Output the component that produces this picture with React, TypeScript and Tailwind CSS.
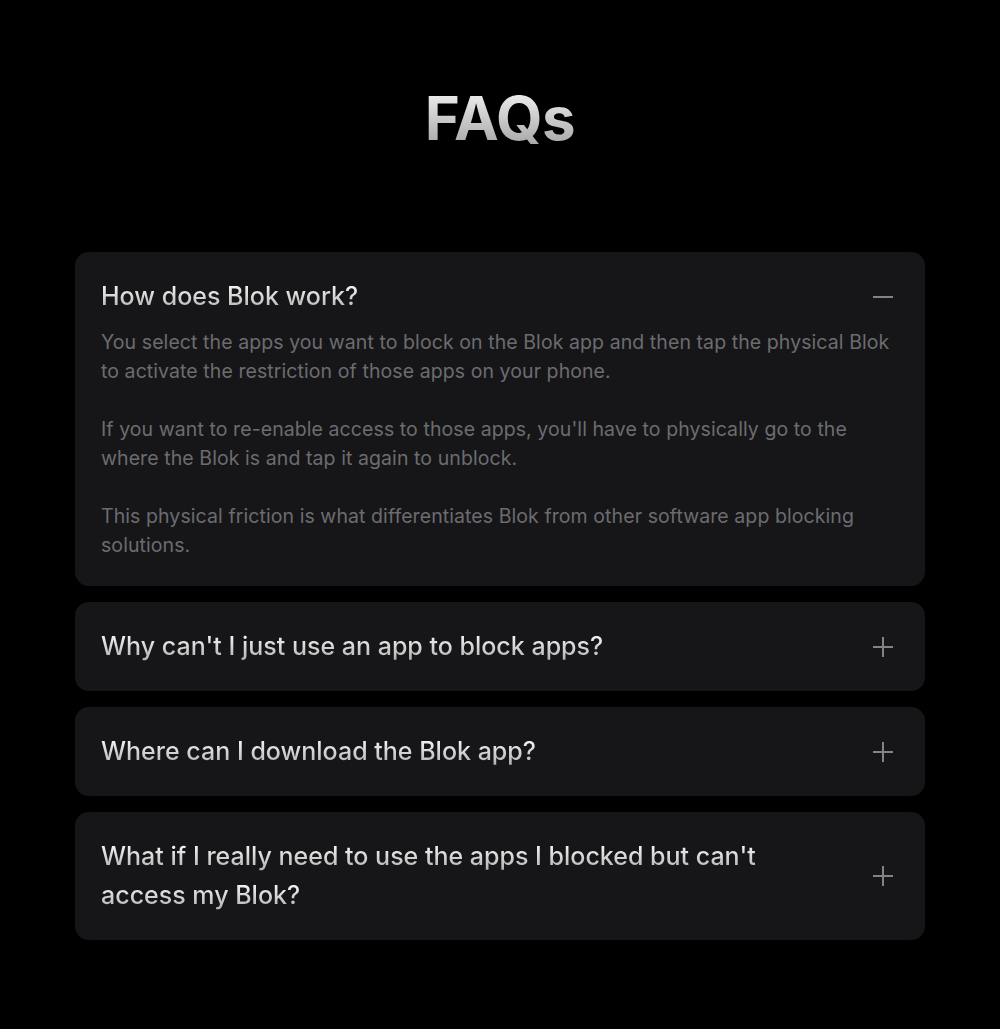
import { useState } from "react"

const faqs = [
  {
    q: "How does Blok work?",
    a: [
      "You select the apps you want to block on the Blok app and then tap the physical Blok to activate the restriction of those apps on your phone.",
      "If you want to re-enable access to those apps, you'll have to physically go to the where the Blok is and tap it again to unblock.",
      "This physical friction is what differentiates Blok from other software app blocking solutions.",
    ],
  },
  { q: "Why can't I just use an app to block apps?", a: [] },
  { q: "Where can I download the Blok app?", a: [] },
  { q: "What if I really need to use the apps I blocked but can't access my Blok?", a: [] },
]

function Icon({ open }: { open: boolean }) {
  return (
    <svg width="22" height="22" viewBox="0 0 22 22" className="shrink-0 text-[#828287]">
      <path d="M1 11h20" stroke="currentColor" strokeWidth="2" />
      {!open && <path d="M11 1v20" stroke="currentColor" strokeWidth="2" />}
    </svg>
  )
}

export default function App() {
  const [open, setOpen] = useState(0)

  return (
    <div className="min-h-[1029px] bg-black pt-[80px] pb-16 font-['Inter','Liberation_Sans',sans-serif]">
      <h1 className="mx-auto w-fit bg-linear-to-b from-white to-[#9a9a9a] bg-clip-text text-center text-[60px] font-bold leading-[76px] tracking-[-0.4px] text-transparent">
        FAQs
      </h1>
      <div className="mx-auto mt-[96px] flex w-[850px] flex-col gap-4">
        {faqs.map((f, i) => (
          <div key={i} className="rounded-[14px] bg-[#161618] px-[26px] py-[25px]">
            <button
              className="flex w-full items-center text-left"
              onClick={() => setOpen(open === i ? -1 : i)}>
              <span className="flex-1 pr-16">
                <span className="bg-linear-to-b from-white to-[#b0b0b0] bg-clip-text text-[25px] font-medium leading-[39px] text-transparent">
                  {f.q}
                </span>
              </span>
              <span className="mr-[5px]">
                <Icon open={open === i} />
              </span>
            </button>
            {open === i && f.a.length > 0 && (
              <div className="mt-[12px] flex flex-col gap-[29px] pb-px text-[19.5px] leading-[29px] tracking-[0.08px] text-[#6c6c70]">
                {f.a.map((p, j) => (
                  <p key={j}>{p}</p>
                ))}
              </div>
            )}
          </div>
        ))}
      </div>
    </div>
  )
}
